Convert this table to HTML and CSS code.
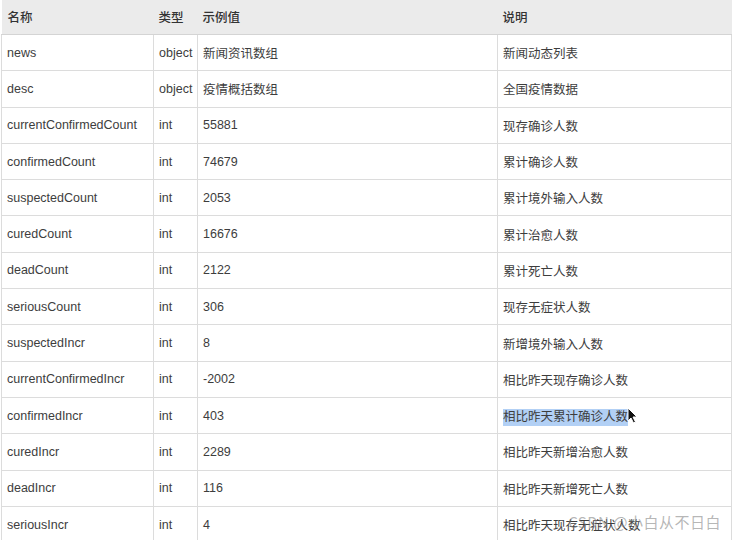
FILE: index.html
```html
<!DOCTYPE html>
<html lang="zh">
<head>
<meta charset="utf-8">
<link rel="stylesheet" href="styles.css">
</head>
<body>
<div class="page">
<table class="api">
<colgroup><col class="c-name"><col class="c-type"><col class="c-val"><col class="c-desc"></colgroup>
<thead>
<tr><th>名称</th><th>类型</th><th>示例值</th><th>说明</th></tr>
</thead>
<tbody>
<tr><td>news</td><td>object</td><td>新闻资讯数组</td><td>新闻动态列表</td></tr>
<tr><td>desc</td><td>object</td><td>疫情概括数组</td><td>全国疫情数据</td></tr>
<tr><td>currentConfirmedCount</td><td>int</td><td>55881</td><td>现存确诊人数</td></tr>
<tr><td>confirmedCount</td><td>int</td><td>74679</td><td>累计确诊人数</td></tr>
<tr><td>suspectedCount</td><td>int</td><td>2053</td><td>累计境外输入人数</td></tr>
<tr><td>curedCount</td><td>int</td><td>16676</td><td>累计治愈人数</td></tr>
<tr><td>deadCount</td><td>int</td><td>2122</td><td>累计死亡人数</td></tr>
<tr><td>seriousCount</td><td>int</td><td>306</td><td>现存无症状人数</td></tr>
<tr><td>suspectedIncr</td><td>int</td><td>8</td><td>新增境外输入人数</td></tr>
<tr><td>currentConfirmedIncr</td><td>int</td><td>-2002</td><td>相比昨天现存确诊人数</td></tr>
<tr><td>confirmedIncr</td><td>int</td><td>403</td><td class="sel-cell"><span class="selected">相比昨天累计确诊人数</span><svg class="cursor" width="11" height="17" viewBox="0 0 11 17"><path d="M1 1 L1 14 L4 11 L6.5 16 L8.5 15 L6 10 L10 10 Z" fill="#111" stroke="#fff" stroke-width="1"/></svg></td></tr>
<tr><td>curedIncr</td><td>int</td><td>2289</td><td>相比昨天新增治愈人数</td></tr>
<tr><td>deadIncr</td><td>int</td><td>116</td><td>相比昨天新增死亡人数</td></tr>
<tr><td>seriousIncr</td><td>int</td><td>4</td><td>相比昨天现存无症状人数</td></tr>
</tbody>
</table>
<div class="watermark">CSDN @小白从不日白</div>
</div>
</body>
</html>
```
FILE: styles.css
```css
html, body {
  margin: 0;
  padding: 0;
  background: #ffffff;
}
.page {
  position: relative;
  width: 733px;
  height: 540px;
  overflow: hidden;
  padding-left: 1px;
  box-sizing: border-box;
}
.api {
  table-layout: fixed;
  border-collapse: collapse;
  width: 730px;
  font-family: "Liberation Sans", "Noto Sans CJK SC", sans-serif;
  font-size: 12.5px;
  color: #3d3d3d;
}
.c-name { width: 152px; }
.c-type { width: 44px; }
.c-val { width: 300px; }
.c-desc { width: 234px; }
.api th {
  background: #ebebeb;
  height: 33px;
  text-align: left;
  font-weight: 500;
  color: #333333;
  padding: 0 0 1px 5px;
  border-bottom: 1px solid #d4d4d4;
}
.api th:first-child { padding-left: 6px; }
.api td {
  height: 35.3px;
  padding: 0 0 0 5px;
  border: 1px solid #dcdcdc;
  border-top: none;
  white-space: nowrap;
  overflow: visible;
}
.sel-cell { position: relative; }
.selected {
  background: #b2d0f5;
  padding: 1px 0 2px;
}
.cursor {
  position: absolute;
  left: 129px;
  top: 9px;
}
.watermark {
  position: absolute;
  right: 12px;
  bottom: 8px;
  font-family: "Noto Sans CJK SC", "Liberation Sans", sans-serif;
  font-size: 15px;
  color: rgba(120, 120, 120, 0.55);
  letter-spacing: 0.5px;
}
```
